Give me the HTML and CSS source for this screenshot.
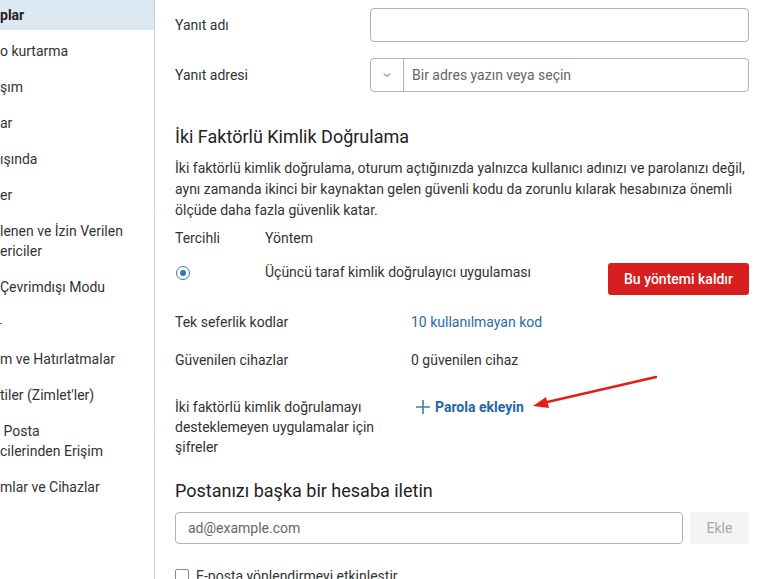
FILE: index.html
```html
<!DOCTYPE html>
<html lang="tr">
<head>
<meta charset="utf-8">
<link rel="stylesheet" href="styles.css">
</head>
<body>
<div class="app">
  <nav class="sidebar">
    <div class="nav-item active">plar</div>
    <div class="nav-item">o kurtarma</div>
    <div class="nav-item">şım</div>
    <div class="nav-item">ar</div>
    <div class="nav-item">ışında</div>
    <div class="nav-item">er</div>
    <div class="nav-item">lenen ve İzin Verilen<br>ericiler</div>
    <div class="nav-item">Çevrimdışı Modu</div>
    <div class="nav-item"><span class="clip">-</span></div>
    <div class="nav-item">m ve Hatırlatmalar</div>
    <div class="nav-item">tiler (Zimlet'ler)</div>
    <div class="nav-item">&nbsp;Posta<br>cilerinden Erişim</div>
    <div class="nav-item">mlar ve Cihazlar</div>
  </nav>
  <main class="content">
    <div class="form-row">
      <label class="form-label">Yanıt adı</label>
      <div class="input"></div>
    </div>
    <div class="form-row second">
      <label class="form-label">Yanıt adresi</label>
      <div class="input combo">
        <span class="combo-toggle">
          <svg width="10" height="6" viewBox="0 0 10 6"><path d="M2 1.5 L5 4.5 L8 1.5" fill="none" stroke="#555" stroke-width="1"/></svg>
        </span>
        <span class="placeholder">Bir adres yazın veya seçin</span>
      </div>
    </div>

    <h2 class="section-title">İki Faktörlü Kimlik Doğrulama</h2>
    <p class="desc">İki faktörlü kimlik doğrulama, oturum açtığınızda yalnızca kullanıcı adınızı ve parolanızı değil, aynı zamanda ikinci bir kaynaktan gelen güvenli kodu da zorunlu kılarak hesabınıza önemli ölçüde daha fazla güvenlik katar.</p>

    <div class="method-head">
      <span class="col-pref">Tercihli</span>
      <span>Yöntem</span>
    </div>
    <div class="method-row">
      <span class="col-pref"><span class="radio"></span></span>
      <span class="method-name">Üçüncü taraf kimlik doğrulayıcı uygulaması</span>
      <button class="btn-danger">Bu yöntemi kaldır</button>
    </div>

    <div class="info-grid">
      <span class="info-label">Tek seferlik kodlar</span>
      <span class="link">10 kullanılmayan kod</span>
      <span class="info-label">Güvenilen cihazlar</span>
      <span>0 güvenilen cihaz</span>
      <span class="info-label narrow">İki faktörlü kimlik doğrulamayı desteklemeyen uygulamalar için şifreler</span>
      <span class="add-link">
        <svg class="plus" width="16" height="16" viewBox="0 0 16 16"><path d="M8 1 V15 M1 8 H15" stroke="#4b7aa3" stroke-width="1.6" fill="none"/></svg>
        <span>Parola ekleyin</span>
      </span>
    </div>

    <h2 class="section-title fwd">Postanızı başka bir hesaba iletin</h2>
    <div class="fwd-row">
      <div class="input fwd-input"><span class="placeholder">ad@example.com</span></div>
      <button class="btn-disabled">Ekle</button>
    </div>
    <div class="check-row">
      <span class="checkbox"></span>
      <span>E-posta yönlendirmeyi etkinleştir</span>
    </div>

    <svg class="annot-arrow" width="140" height="50" viewBox="0 0 140 50">
      <path d="M129 4 L16 30" stroke="#e81b1b" stroke-width="2.4" fill="none" stroke-linecap="round"/>
      <path d="M6 33 L19 24 L22 35 Z" fill="#e81b1b"/>
    </svg>
  </main>
</div>
</body>
</html>
```

FILE: styles.css
```css
html, body {
  margin: 0;
  padding: 0;
  background: #fff;
}
body {
  font-family: Roboto, "Liberation Sans", sans-serif;
  font-size: 14px;
  color: #333;
  width: 763px;
  height: 579px;
  overflow: hidden;
}
.app {
  display: flex;
  height: 579px;
}
.sidebar {
  width: 154px;
  flex: none;
  border-right: 1px solid #cfcfcf;
  overflow: hidden;
  margin-top: -3px;
}
.nav-item {
  padding: 8px 0;
  line-height: 20px;
  color: #333;
  white-space: nowrap;
}
.nav-item.active {
  background: #dce8f2;
  font-weight: 700;
  color: #222;
  padding-bottom: 5px;
  margin-bottom: 3px;
}
.clip {
  display: inline-block;
  margin-left: -2px;
  color: #555;
}
.content {
  position: relative;
  flex: 1;
  padding: 8px 14px 0 20px;
}
.form-row {
  display: flex;
  align-items: center;
  height: 34px;
}
.form-row.second {
  margin-top: 16px;
}
.form-label {
  width: 195px;
  flex: none;
}
.input {
  flex: 1;
  border: 1px solid #b3b3b3;
  border-radius: 4px;
  box-sizing: border-box;
  height: 34px;
  display: flex;
  align-items: center;
}
.combo-toggle {
  width: 33px;
  height: 100%;
  border-right: 1px solid #b3b3b3;
  display: flex;
  align-items: center;
  justify-content: center;
  box-sizing: border-box;
}
.placeholder {
  color: #666;
  padding-left: 8px;
}
.section-title {
  font-size: 18px;
  font-weight: 400;
  line-height: 24px;
  color: #222;
  margin: 33px 0 0;
}
.desc {
  margin: 9px 0 0;
  line-height: 21px;
}
.method-head {
  display: flex;
  margin-top: 7px;
  line-height: 20px;
}
.col-pref {
  width: 90px;
  flex: none;
}
.method-row {
  display: flex;
  align-items: flex-start;
  margin-top: 13px;
  line-height: 20px;
}
.radio {
  display: inline-block;
  width: 12px;
  height: 12px;
  border: 1px solid #2f78c0;
  border-radius: 50%;
  margin: 5px 0 0 1px;
  position: relative;
  vertical-align: top;
}
.radio::after {
  content: "";
  position: absolute;
  left: 3px;
  top: 3px;
  width: 6px;
  height: 6px;
  border-radius: 50%;
  background: #2f78c0;
}
.method-name {
  flex: 1;
  margin-top: 1px;
}
.btn-danger {
  margin-top: 2px;
  height: 32px;
  width: 141px;
  background: #d81e1e;
  color: #fff;
  border: none;
  border-radius: 3px;
  font-family: Roboto, "Liberation Sans", sans-serif;
  font-size: 14px;
  font-weight: 500;
}
.info-grid {
  display: grid;
  grid-template-columns: 236px 1fr;
  row-gap: 18px;
  margin-top: 17px;
  line-height: 20px;
}
.narrow {
  max-width: 200px;
  margin-top: 9px;
}
.link {
  color: #2a6ca5;
}
.add-link {
  display: flex;
  align-items: center;
  gap: 4px;
  margin-left: 4px;
  align-self: start;
  margin-top: 9px;
  color: #1f67a3;
  font-weight: 700;
}
.plus {
  flex: none;
}
.section-title.fwd {
  margin-top: 22px;
}
.fwd-row {
  display: flex;
  gap: 7px;
  margin-top: 9px;
}
.fwd-input {
  height: 32px;
  flex: 1;
}
.fwd-input .placeholder {
  padding-left: 12px;
}
.btn-disabled {
  width: 59px;
  height: 32px;
  background: #f4f4f4;
  border: none;
  border-radius: 3px;
  color: #a9a9a9;
  font-family: Roboto, "Liberation Sans", sans-serif;
  font-size: 14px;
}
.check-row {
  display: flex;
  align-items: center;
  gap: 7px;
  margin-top: 22px;
  line-height: 20px;
}
.checkbox {
  width: 12px;
  height: 12px;
  border: 1px solid #8a8a8a;
  border-radius: 2px;
}
.annot-arrow {
  position: absolute;
  left: 372px;
  top: 373px;
}
```
